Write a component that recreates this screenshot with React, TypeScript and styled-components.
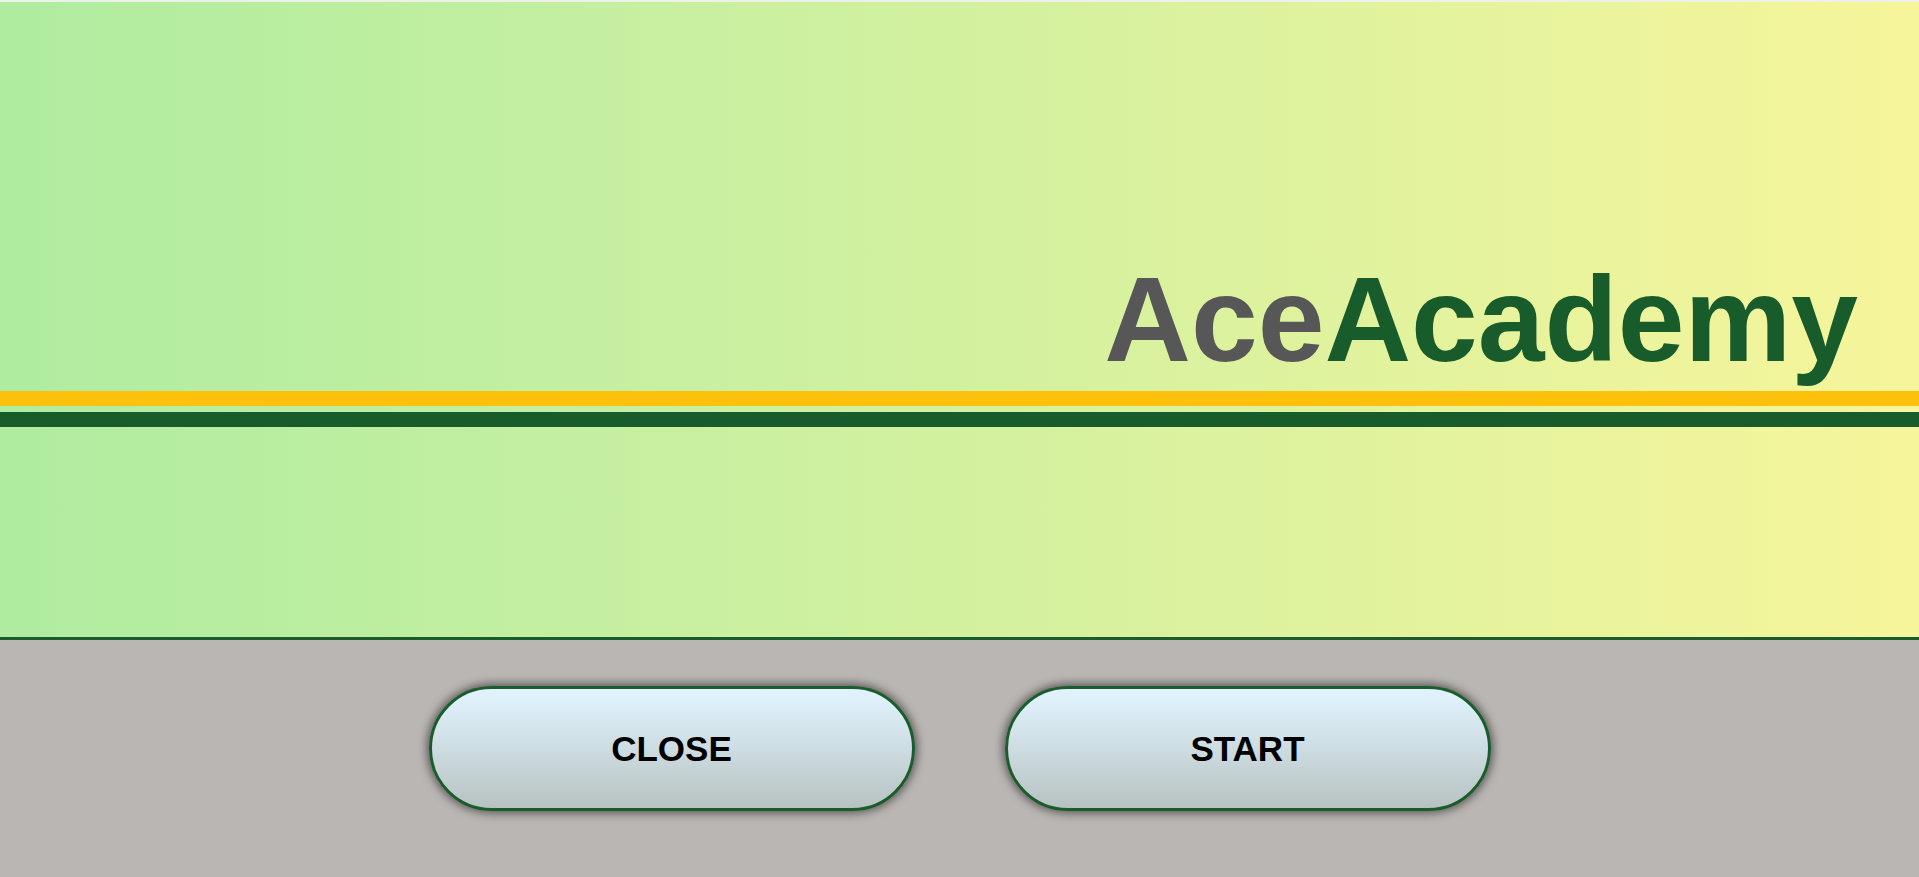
import React from "react";
import styled, { createGlobalStyle } from "styled-components";

const GlobalStyle = createGlobalStyle`
  html, body {
    margin: 0;
    padding: 0;
    background: #bab6b4;
    font-family: "Liberation Sans", Arial, sans-serif;
  }
  * { box-sizing: border-box; }
`;

const Page = styled.div`
  width: 100%;
  height: 877px;
  display: flex;
  flex-direction: column;
  border-top: 2px solid #eef1e8;
  overflow: hidden;
`;

const Header = styled.header`
  height: 638px;
  flex: 0 0 auto;
  background: linear-gradient(to right, #afeca0 0%, #cbf0a0 40%, #f6f59b 100%);
  border-bottom: 3px solid #1a5c2c;
  display: flex;
  flex-direction: column;
  padding-top: 257px;
`;

const TitleRow = styled.div`
  display: flex;
  justify-content: flex-end;
  padding-right: 61px;
`;

const Title = styled.h1`
  margin: 0;
  font-family: "Liberation Sans", Arial, sans-serif;
  font-weight: 700;
  font-size: 120px;
  line-height: 120px;
  letter-spacing: 0;
`;

const Part = styled.span<{ $tone: "gray" | "green" }>`
  color: ${(p) => (p.$tone === "gray" ? "#575757" : "#185c2c")};
`;

const Stripe = styled.div<{ $color: string; $gap: number }>`
  height: 15px;
  margin-top: ${(p) => p.$gap}px;
  background: ${(p) => p.$color};
`;

const Footer = styled.footer`
  flex: 1 1 auto;
  background: #bab6b4;
  display: flex;
  justify-content: center;
  align-items: flex-start;
  gap: 90px;
  padding-top: 46px;
`;

const PillButton = styled.button`
  width: 486px;
  height: 125px;
  border-radius: 63px;
  border: 3px solid #1a5c2c;
  background: linear-gradient(to bottom, #e1f4fe 0%, #cfdfe5 45%, #b8c2c1 100%);
  box-shadow: 0 0 10px 2px rgba(0, 0, 0, 0.55);
  font-family: "Liberation Sans", Arial, sans-serif;
  font-weight: 700;
  font-size: 35px;
  color: #000;
  cursor: pointer;
  display: flex;
  align-items: center;
  justify-content: center;
  padding: 0;
`;

export default function App() {
  return (
    <>
      <GlobalStyle />
      <Page>
        <Header>
          <TitleRow>
            <Title>
              <Part $tone="gray">Ace</Part>
              <Part $tone="green">Academy</Part>
            </Title>
          </TitleRow>
          <Stripe $color="#fec10b" $gap={12} />
          <Stripe $color="#185c2c" $gap={6} />
        </Header>
        <Footer>
          <PillButton>CLOSE</PillButton>
          <PillButton>START</PillButton>
        </Footer>
      </Page>
    </>
  );
}
